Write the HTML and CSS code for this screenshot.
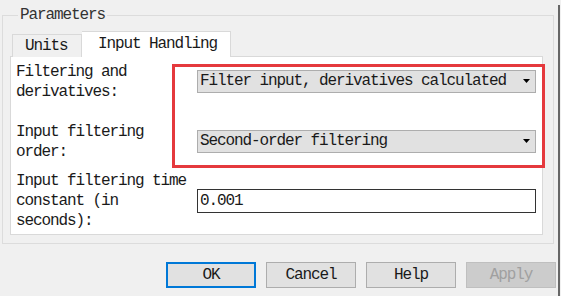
FILE: index.html
```html
<!DOCTYPE html>
<html lang="en">
<head>
    <meta charset="UTF-8">
    <meta name="viewport" content="width=device-width, initial-scale=1.0">
    <title>Parameters</title>
    <link rel="stylesheet" href="styles.css">
</head>
<body>

    <div class="window">
        <fieldset class="params">
            <legend>Parameters</legend>

            <div class="tabs">
                <div class="tab">Units</div>
                <div class="tab active">Input Handling</div>
            </div>

            <div class="panel">
                <div class="row spaced">
                    <label class="label">Filtering and derivatives:</label>
                    <div class="select">
                        <span>Filter input, derivatives calculated</span>
                        <svg class="arrow" width="7" height="4" viewBox="0 0 7 4"><polygon points="0,0 7,0 3.5,4" fill="#000"/></svg>
                    </div>
                </div>

                <div class="row">
                    <label class="label">Input filtering order:</label>
                    <div class="select">
                        <span>Second-order filtering</span>
                        <svg class="arrow" width="7" height="4" viewBox="0 0 7 4"><polygon points="0,0 7,0 3.5,4" fill="#000"/></svg>
                    </div>
                </div>

                <div class="row">
                    <label class="label">Input filtering time constant (in seconds):</label>
                    <div class="textbox">0.001</div>
                </div>

                <!-- red annotation box drawn over the two dropdowns -->
                <div class="highlight"></div>
            </div>
        </fieldset>

        <div class="buttons">
            <button class="btn default">OK</button>
            <button class="btn">Cancel</button>
            <button class="btn">Help</button>
            <button class="btn disabled">Apply</button>
        </div>
    </div>

</body>
</html>
```

FILE: styles.css
```css
body {
    margin: 0;
    background-color: #f0f0f0;
    font-family: "Liberation Mono", monospace;
    font-size: 16px;
    letter-spacing: -1.1px;
    color: #1a1a1a;
}
.window {
    width: 558px;
    height: 296px;
    border-right: 2px solid #666;
    box-sizing: content-box;
}
.params {
    margin: 5px 0 0 2px;
    width: 552px;
    box-sizing: border-box;
    border: 1px solid #dcdcdc;
    padding: 0 10px 8px 7px;
}
.params legend {
    margin-left: 8px;
    padding: 0 2px;
    line-height: 20px;
    color: #333;
}
.tabs {
    display: flex;
    align-items: flex-end;
    margin-top: 6px;
    margin-left: 2px;
    margin-bottom: -1px;
    position: relative;
    z-index: 1;
}
.tab {
    height: 23px;
    line-height: 23px;
    box-sizing: border-box;
    border: 1px solid #d9d9d9;
    border-bottom: none;
    background-color: #f0f0f0;
    padding-left: 12px;
    width: 70px;
}
.tab.active {
    height: 26px;
    line-height: 25px;
    width: 149px;
    background-color: #fff;
    padding-left: 16px;
    border-left: none;
}
.panel {
    position: relative;
    height: 179px;
    box-sizing: border-box;
    background-color: #fff;
    border: 1px solid #d9d9d9;
    padding: 5px 6px 0 5px;
}
.row {
    display: flex;
    align-items: center;
    gap: 9px;
    margin-bottom: 9px;
}
.row.spaced {
    margin-bottom: 20px;
}
.label {
    width: 172px;
    line-height: 20px;
    flex-shrink: 0;
}
.select {
    width: 339px;
    height: 23px;
    box-sizing: border-box;
    border: 1px solid #adadad;
    background-color: #e1e1e1;
    display: flex;
    align-items: center;
    justify-content: space-between;
    padding: 0 5px 0 2px;
    margin-top: -2px;
}
.arrow {
    display: block;
}
.textbox {
    width: 339px;
    height: 24px;
    line-height: 22px;
    box-sizing: border-box;
    border: 1px solid #333;
    background-color: #fff;
    padding-left: 2px;
}
.highlight {
    position: absolute;
    left: 161px;
    top: 7px;
    width: 373px;
    height: 104px;
    box-sizing: border-box;
    border: 3px solid #e5393d;
    pointer-events: none;
}
.buttons {
    display: flex;
    justify-content: flex-end;
    gap: 10px;
    margin-top: 18px;
    padding-right: 2px;
}
.btn {
    width: 90px;
    height: 26px;
    box-sizing: border-box;
    border: 1px solid #adadad;
    background-color: #e1e1e1;
    font-family: inherit;
    font-size: 16px;
    letter-spacing: -1.1px;
    color: #1a1a1a;
    padding: 0;
}
.btn.default {
    border: 2px solid #0078d7;
}
.btn.disabled {
    background-color: #cccccc;
    border-color: #bfbfbf;
    color: #a0a0a0;
}
```
